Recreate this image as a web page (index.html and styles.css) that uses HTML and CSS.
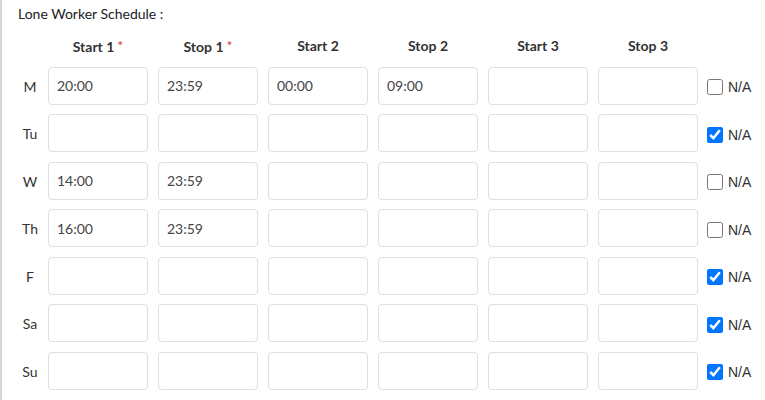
FILE: index.html
```html
<!DOCTYPE html>
<html>
<head>
<meta charset="utf-8">
<link rel="stylesheet" href="styles.css">
</head>
<body>
<div class="panel">
  <div class="title">Lone Worker Schedule :</div>
  <div class="grid">
    <div class="corner"></div>
    <div class="hd">Start 1<span class="req">*</span></div>
    <div class="hd">Stop 1<span class="req">*</span></div>
    <div class="hd">Start 2</div>
    <div class="hd">Stop 2</div>
    <div class="hd">Start 3</div>
    <div class="hd">Stop 3</div>
    <div class="corner"></div>

    <div class="day">M</div>
    <input class="tm" value="20:00"><input class="tm" value="23:59"><input class="tm" value="00:00"><input class="tm" value="09:00"><input class="tm" value=""><input class="tm" value="">
    <label class="na"><input type="checkbox">N/A</label>

    <div class="day">Tu</div>
    <input class="tm"><input class="tm"><input class="tm"><input class="tm"><input class="tm"><input class="tm">
    <label class="na"><input type="checkbox" checked>N/A</label>

    <div class="day">W</div>
    <input class="tm" value="14:00"><input class="tm" value="23:59"><input class="tm"><input class="tm"><input class="tm"><input class="tm">
    <label class="na"><input type="checkbox">N/A</label>

    <div class="day">Th</div>
    <input class="tm" value="16:00"><input class="tm" value="23:59"><input class="tm"><input class="tm"><input class="tm"><input class="tm">
    <label class="na"><input type="checkbox">N/A</label>

    <div class="day">F</div>
    <input class="tm"><input class="tm"><input class="tm"><input class="tm"><input class="tm"><input class="tm">
    <label class="na"><input type="checkbox" checked>N/A</label>

    <div class="day">Sa</div>
    <input class="tm"><input class="tm"><input class="tm"><input class="tm"><input class="tm"><input class="tm">
    <label class="na"><input type="checkbox" checked>N/A</label>

    <div class="day">Su</div>
    <input class="tm"><input class="tm"><input class="tm"><input class="tm"><input class="tm"><input class="tm">
    <label class="na"><input type="checkbox" checked>N/A</label>
  </div>
</div>
</body>
</html>
```
FILE: styles.css
```css
html, body {
  margin: 0;
  padding: 0;
  background: #fff;
  overflow: hidden;
}
body {
  font-family: Lato, "Open Sans", sans-serif;
  color: #333;
}
.panel {
  border-left: 2px solid #d6d6d6;
  height: 400px;
  box-sizing: border-box;
  padding-top: 5px;
}
.title {
  font-size: 14px;
  line-height: 18px;
  padding-left: 16px;
  color: #222;
}
.grid {
  display: grid;
  grid-template-columns: 36px repeat(6, 110px) auto;
  grid-template-rows: 20px;
  grid-auto-rows: 38px;
  row-gap: 9.5px;
  margin-left: 10px;
  margin-top: 14px;
  align-items: center;
}
.hd {
  font-size: 14px;
  font-weight: 700;
  width: 100px;
  text-align: center;
  color: #333;
  line-height: 20px;
  margin-top: -2px;
}
.req {
  color: #e0393e;
  font-weight: 400;
  font-size: 14px;
  margin-left: 3px;
  vertical-align: 1px;
}
.day {
  font-size: 14px;
  text-align: center;
  color: #333;
  margin-top: 1px;
}
.tm {
  box-sizing: border-box;
  width: 100px;
  height: 38px;
  border: 1px solid #dcdfe6;
  border-radius: 4px;
  padding: 0 0 0 8px;
  margin: 0;
  font-family: Lato, sans-serif;
  font-size: 14px;
  color: #444;
  background: #fff;
  outline: none;
  align-self: stretch;
}
.na {
  display: flex;
  align-items: center;
  gap: 5px;
  font-family: "Liberation Sans", Arial, sans-serif;
  font-size: 14px;
  color: #333;
  margin-top: 3px;
  margin-left: -1px;
}
.na input {
  width: 16px;
  height: 16px;
  margin: 0;
}
```
